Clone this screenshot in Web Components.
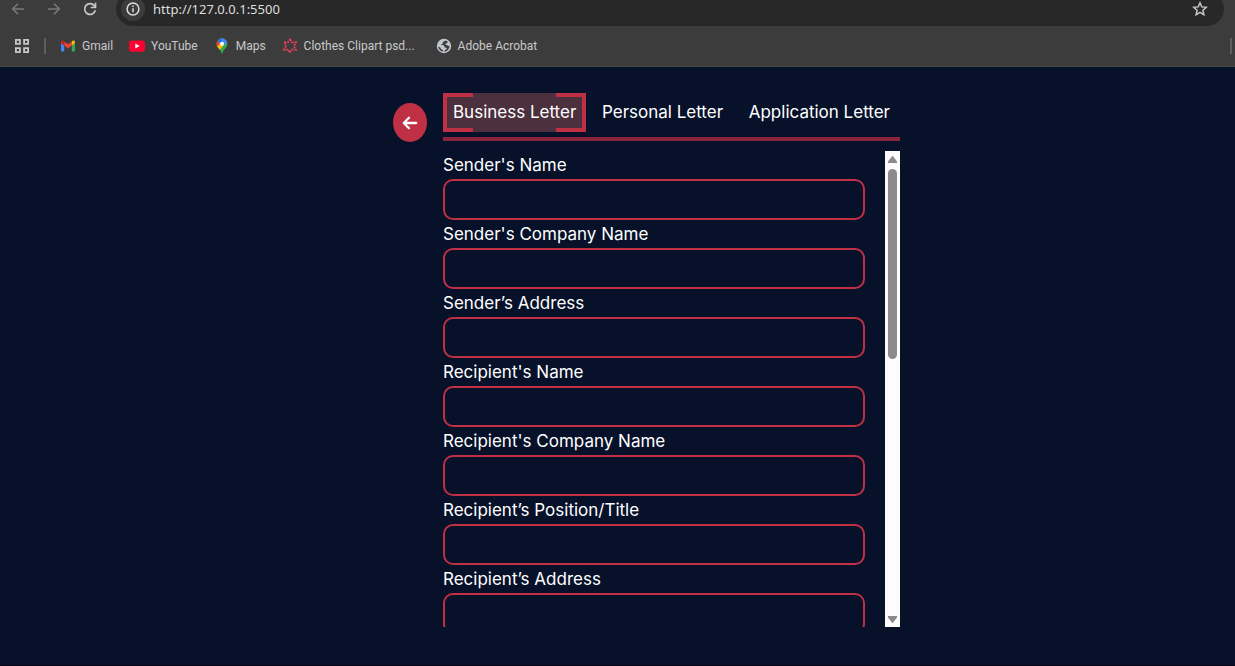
<!DOCTYPE html>
<html lang="en">
<head>
<meta charset="utf-8">
<title>Letter Generator</title>
<style>
  html, body { height: 100%; margin: 0; }
  body { background: #07112a; color: #fff; font: 17px/28px Inter, "Liberation Sans", sans-serif; }
</style>
</head>
<body>
<letter-app></letter-app>

<template id="t-app">
  <style>
    :host { display: flex; flex-direction: column; height: 100%; box-sizing: border-box; border-bottom: 1px solid #020617; }
    main { flex: 1; min-height: 0; display: flex; justify-content: center; gap: 16px; padding: 26px 0 38px 58px; box-sizing: border-box; }
    back-button { margin-top: 10px; }
    .panel { display: flex; flex-direction: column; width: 457px; min-height: 0; }
    scroll-form { flex: 1; min-height: 0; margin-top: 10px; }
  </style>
  <browser-bar></browser-bar>
  <main>
    <back-button></back-button>
    <div class="panel">
      <letter-tabs>
        <letter-tab active>Business Letter</letter-tab>
        <letter-tab>Personal Letter</letter-tab>
        <letter-tab>Application Letter</letter-tab>
      </letter-tabs>
      <scroll-form>
        <text-field label="Sender's Name"></text-field>
        <text-field label="Sender's Company Name"></text-field>
        <text-field label="Sender’s Address"></text-field>
        <text-field label="Recipient's Name"></text-field>
        <text-field label="Recipient's Company Name"></text-field>
        <text-field label="Recipient’s Position/Title"></text-field>
        <text-field label="Recipient’s Address"></text-field>
      </scroll-form>
    </div>
  </main>
</template>

<template id="t-browser">
  <style>
    :host { display: block; flex: none; background: #3c3c3c; border-bottom: 1px solid #4b4b4a; color: #c9c9c9; font: 12px/16px Roboto, "Noto Sans", sans-serif; }
    .nav { display: flex; align-items: flex-end; height: 26px; overflow: hidden; padding: 0 11px 0 10px; }
    button { flex: none; display: flex; align-items: center; justify-content: center; padding: 0; border: 0; background: none; color: #c7c7c7; width: 16px; height: 34px; }
    .nav > button { margin-right: 20px; }
    .nav > button:disabled { color: #777; }
    .nav > button:nth-of-type(3) { margin-right: 18px; }
    .pill { flex: 1; display: flex; align-items: center; height: 34px; border-radius: 17px; background: #282828; padding: 0 16px 0 5px; box-sizing: border-box; }
    .pill .info { width: 24px; height: 24px; border-radius: 12px; background: #3c3c3c; color: #ddd; margin-right: 8px; }
    input { flex: 1; min-width: 0; border: 0; padding: 0; background: none; color: #dedede; font: 13px/20px "Noto Sans", sans-serif; outline: 0; }
    .marks { display: flex; align-items: center; height: 40px; padding: 0 3px 0 14px; }
    .sep { width: 2px; height: 16px; background: #5e5e5e; margin: 0 14px; }
    .end { margin: 0 0 0 auto; }
    svg { display: block; flex: none; }
  </style>
  <div class="nav">
    <button disabled aria-label="Back"><svg width="16" height="16" viewBox="0 0 16 16" fill="none" stroke="currentColor" stroke-width="1.6"><path d="M14 8H3M8 2.7 2.7 8 8 13.3"/></svg></button>
    <button disabled aria-label="Forward"><svg width="16" height="16" viewBox="0 0 16 16" fill="none" stroke="currentColor" stroke-width="1.6"><path d="M2 8h11M8 2.7 13.3 8 8 13.3"/></svg></button>
    <button aria-label="Reload"><svg width="16" height="16" viewBox="0 0 16 16" fill="none" stroke="currentColor" stroke-width="1.7"><path d="M13.3 9.3A5.4 5.4 0 1 1 12.3 4.7L13.4 6M13.5 1.8v4.7H8.8"/></svg></button>
    <div class="pill">
      <button class="info" aria-label="Site information"><svg width="14" height="14" viewBox="0 0 14 14"><circle cx="7" cy="7" r="5.9" fill="none" stroke="currentColor" stroke-width="1.5"/><path d="M7 6.2v4M7 3.6v1.5" stroke="currentColor" stroke-width="1.5"/></svg></button>
      <input aria-label="Address" value="http://127.0.0.1:5500">
      <button aria-label="Bookmark this page"><svg width="16" height="16" viewBox="0 0 16 16" fill="none" stroke="currentColor" stroke-width="1.5"><path d="m8 1.8 1.8 4.1 4.5.4-3.4 3 1 4.4L8 11.4l-3.9 2.3 1-4.4-3.4-3 4.5-.4z"/></svg></button>
    </div>
  </div>
  <div class="marks">
    <button aria-label="Apps"><svg width="16" height="16" viewBox="0 0 16 16" fill="none" stroke="currentColor" stroke-width="1.8"><path d="M1.9 1.900h4v4h-4zM10.100 1.900h4v4h-4zM1.900 10.100h4v4h-4zM10.100 10.100h4v4h-4z"/></svg></button>
    <span class="sep"></span>
    <book-mark><svg slot="icon" width="16" height="16" viewBox="0 0 16 16"><path fill="#4285f4" d="M1 5v7.4c0 .6.4 1 1 1h2.2V7.3z"/><path fill="#34a853" d="M15 5v7.4c0 .6-.4 1-1 1h-2.200V7.300z"/><path fill="#ea4335" d="M4.200 7.500V3.400L8 6.300l3.800-2.900v4.100L8 10.400z"/><path fill="#c5221f" d="M1 5.100V4c0-1.400 1.500-2 2.600-1.100l.6.500v4.100z"/><path fill="#fbbc04" d="M15 5.100V4c0-1.400-1.500-2-2.600-1.100l-.6.500v4.100z"/></svg>Gmail</book-mark>
    <book-mark><svg slot="icon" width="16" height="16" viewBox="0 0 16 16"><rect y="2.400" width="16" height="11.400" rx="2.800" fill="#ff0033"/><path fill="#fff" d="m6.300 5.600 4.400 2.500-4.400 2.500z"/></svg>YouTube</book-mark>
    <book-mark><svg slot="icon" width="16" height="16" viewBox="0 0 16 16"><clipPath id="pin"><path d="M8 .3a5.400 5.400 0 0 0-5.400 5.400c0 4.400 4.200 5.300 4.800 9.400.1.800 1.100.8 1.200 0 .6-4.100 4.800-5 4.800-9.400A5.400 5.400 0 0 0 8 .3z"/></clipPath><g clip-path="url(#pin)"><path fill="#34a853" d="M0 0h16v16H0z"/><path fill="#fbbc04" d="M1 8.500 6 3l5 3-7 8z"/><path fill="#ea4335" d="M1 0h3.700L8 3.800 2.500 9.200z"/><path fill="#1a73e8" d="M3.500 2 6 0h2l2 2-3.700 4z"/><path fill="#4285f4" d="M7 0h7v3.500L9 8z"/></g><circle cx="8" cy="5.700" r="2" fill="#fff"/></svg>Maps</book-mark>
    <book-mark style="--label:116px"><svg slot="icon" width="16" height="16" viewBox="0 0 16 16" fill="none" stroke="#e8405a" stroke-width="1.700"><path stroke-dasharray="2.200 .9" d="M8 1.300 10 4.400l4-.2L12 8l2 3.800-4-.2L8 14.700l-2-3.100-4 .2L4 8 2 4.200l4 .2z"/></svg>Clothes Clipart psd...</book-mark>
    <book-mark><svg slot="icon" width="16" height="16" viewBox="0 0 16 16"><circle cx="8" cy="8" r="7.200" fill="#c3c6cc"/><path fill="#3c3c3c" d="M9.500 2.600c-.6 1.200-1.800.6-2.500 1.500-.6.700.2 1.300-.6 1.900-.7.500-1.300 0-1.600.8.700.7 2.600.1 3.300.9.600.7.100 1.500 1 1.900.7.300 1.600 0 1.700.8 0 1-1.400.7-1.700 1.700-.2.700-.9 1.300-1.700 1.500a5.700 5.700 0 0 0 6.200-6c-.8.500-1.400.4-1.900-.2-.6-.7-1.800 0-2.300-.8-.3-.7.400-1.200 1.200-1.300.8 0 .7-.9 1.300-1.300A5.700 5.700 0 0 0 9.500 2.600zM2.300 8.200a5.700 5.700 0 0 0 4.600 5.400c.1-.9.100-1.600-.7-2-.8-.3-1.500-.4-1.500-1.400 0-1-1.400-.9-2.400-2z"/></svg>Adobe Acrobat</book-mark>
    <span class="sep end"></span>
  </div>
</template>

<template id="t-mark">
  <style>
    :host { display: block; margin-right: 16px; }
    a { display: flex; align-items: center; gap: 6px; color: inherit; text-decoration: none; white-space: nowrap; }
    span { min-width: var(--label, 0); }
  </style>
  <a href="#"><slot name="icon"></slot><span><slot></slot></span></a>
</template>

<template id="t-back">
  <style>
    :host { display: block; flex: none; }
    button { display: flex; align-items: center; justify-content: center; width: 34px; height: 39px; padding: 0; border: 0; border-radius: 50%; background: #c03045; color: #fff; }
  </style>
  <button aria-label="Go back"><svg width="16" height="16" viewBox="0 0 16 16" fill="none" stroke="currentColor" stroke-width="2.300" stroke-linecap="round" stroke-linejoin="round"><path d="M14.200 8H2M7 2.800 1.800 8 7 13.200"/></svg></button>
</template>

<template id="t-tabs">
  <style>
    :host { display: flex; justify-content: space-between; flex: none; padding-bottom: 5px; border-bottom: 4px solid #89233e; }
  </style>
  <slot></slot>
</template>

<template id="t-tab">
  <style>
    :host { display: block; }
    button { display: block; height: 39px; padding: 0 6px 1px; border: 0 solid transparent; border-width: 0 4px; background: none; color: #fff; font: inherit; white-space: nowrap; }
    :host([active]) button {
      border-color: #c03045;
      background:
        linear-gradient(#c03045 0 0) left top / 26px 4px,
        linear-gradient(#c03045 0 0) right top / 26px 4px,
        linear-gradient(#c03045 0 0) left bottom / 26px 4px,
        linear-gradient(#c03045 0 0) right bottom / 26px 4px,
        #4c303d;
      background-repeat: no-repeat;
    }
  </style>
  <button><slot></slot></button>
</template>

<template id="t-form">
  <style>
    :host { display: flex; gap: 20px; }
    form { flex: 1; min-width: 0; overflow-y: auto; scrollbar-width: none; }
    .rail { flex: none; display: flex; flex-direction: column; align-items: center; justify-content: space-between; width: 15px; background: #fcfcfc; }
    .thumb { width: 9px; height: 40%; border-radius: 5px; background: #8b8b8b; margin-bottom: auto; }
    svg { display: block; flex: none; }
  </style>
  <form><slot></slot></form>
  <div class="rail" aria-hidden="true">
    <svg width="15" height="18" viewBox="0 0 15 18"><path fill="#8b8b8b" d="M6.800 5.500Q7.500 4.600 8.200 5.500L12 10.500V12H3v-1.500z"/></svg>
    <div class="thumb"></div>
    <svg width="15" height="15" viewBox="0 0 15 15"><path fill="#8b8b8b" d="M6.800 10.500Q7.500 11.400 8.200 10.500L12 5.500V4H3v1.500z"/></svg>
  </div>
</template>

<template id="t-field">
  <style>
    :host { display: block; }
    label { display: block; white-space: nowrap; }
    input { display: block; width: 100%; height: 41px; box-sizing: border-box; padding: 0 10px; border: 2px solid #c03045; border-radius: 10px; background: transparent; color: inherit; font: inherit; outline: 0; }
  </style>
  <label for="f"></label>
  <input id="f" type="text">
</template>

<script>
  function define(name, templateId, setup) {
    customElements.define(name, class extends HTMLElement {
      constructor() {
        super();
        this.attachShadow({ mode: "open" }).append(document.getElementById(templateId).content.cloneNode(true));
      }
      connectedCallback() { if (setup) setup(this); }
    });
  }
  define("book-mark", "t-mark");
  define("browser-bar", "t-browser");
  define("back-button", "t-back");
  define("letter-tab", "t-tab");
  define("letter-tabs", "t-tabs");
  define("text-field", "t-field", el => {
    el.shadowRoot.querySelector("label").textContent = el.getAttribute("label");
  });
  define("scroll-form", "t-form");
  define("letter-app", "t-app");
</script>
</body>
</html>
